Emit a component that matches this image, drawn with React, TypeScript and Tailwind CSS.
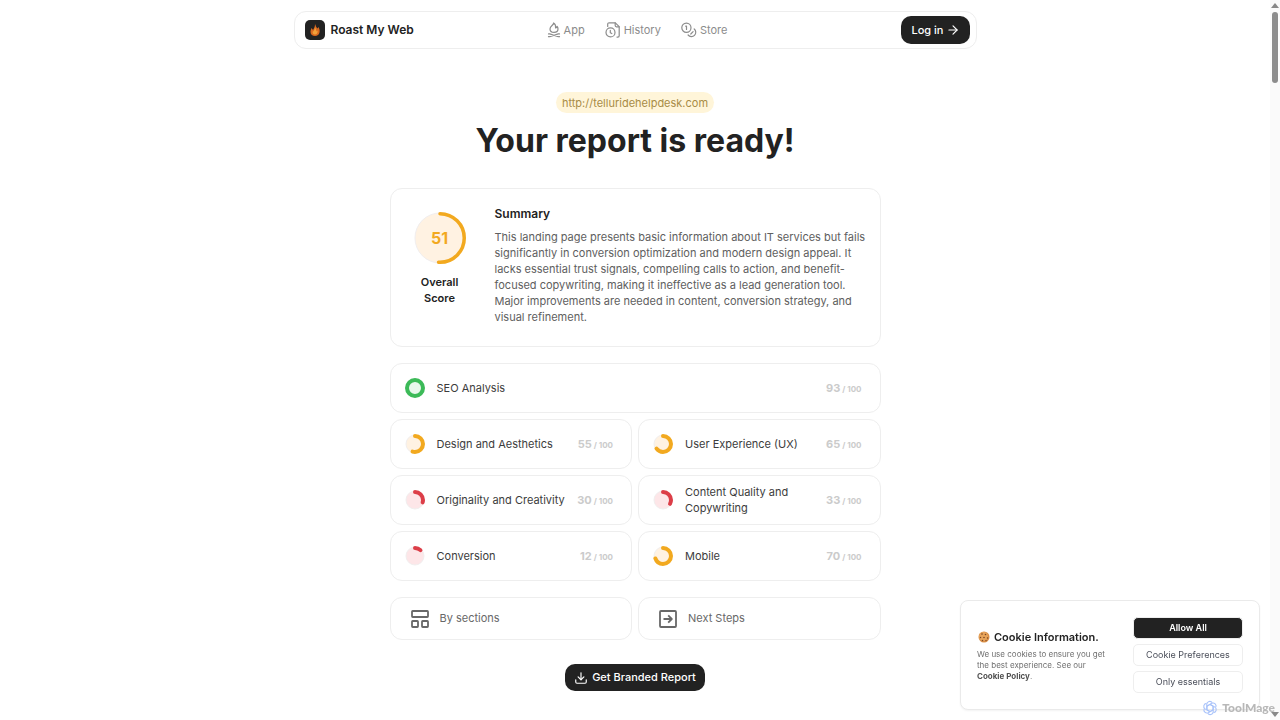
import React from 'react';
import clsx from 'clsx';
import { ArrowRight, Download } from 'lucide-react';

type Tone = 'green' | 'amber' | 'red';

interface ScoreRingProps {
  value: number;
  tone: Tone;
  large?: boolean;
}

interface Category {
  label: string;
  score: number;
  tone: Tone;
  wide?: boolean;
}

const categories: Category[] = [
  { label: 'SEO Analysis', score: 93, tone: 'green', wide: true },
  { label: 'Design and Aesthetics', score: 55, tone: 'amber' },
  { label: 'User Experience (UX)', score: 65, tone: 'amber' },
  { label: 'Originality and Creativity', score: 30, tone: 'red' },
  { label: 'Content Quality and Copywriting', score: 33, tone: 'red' },
  { label: 'Conversion', score: 12, tone: 'red' },
  { label: 'Mobile', score: 70, tone: 'amber' },
];

const tones: Record<Tone, { stroke: string; fill: string }> = {
  green: { stroke: '#3cba58', fill: '#e8f8ec' },
  amber: { stroke: '#f2a91f', fill: '#fff2e2' },
  red: { stroke: '#dc3e48', fill: '#fde6e8' },
};

const ScoreRing: React.FC<ScoreRingProps> = ({ value, tone, large }) => {
  const size = large ? 52 : 20;
  const width = large ? 3.5 : 4;
  const radius = (size - width) / 2;
  const { stroke, fill } = tones[tone];
  const shown = value > 90 ? 100 : value;

  return (
    <svg className={clsx('shrink-0', large ? 'size-13' : 'size-5')} viewBox={`0 0 ${size} ${size}`} fill="none" aria-hidden="true">
      <circle cx={size / 2} cy={size / 2} r={size / 2 - 1} fill={fill} stroke="#f1eeee" strokeWidth="1" />
      <circle
        cx={size / 2}
        cy={size / 2}
        r={radius}
        stroke={stroke}
        strokeWidth={width}
        strokeLinecap="round"
        pathLength={100}
        strokeDasharray={`${shown} 100`}
        transform={`rotate(-90 ${size / 2} ${size / 2})`}
      />
    </svg>
  );
};

const Logo = () => (
  <span className="flex size-5 items-center justify-center rounded-[5px] bg-[#222]">
    <svg className="h-3 w-2.5" viewBox="0 0 20 24" aria-hidden="true">
      <path d="M10 0c2 4 2 6 5 9l2-3c2 4 3 7 2 11-1 4-4 7-9 7s-9-3-9-8c0-3 1-5 2-8l3 4c2-4 4-6 4-12Z" fill="#d9681f" />
      <path d="M10 6c1 3 3 6 3 9l2-2c1 4-1 8-5 8s-6-3-4-7l1 1c1-3 3-5 3-9Z" fill="#f2a13a" />
    </svg>
  </span>
);

const CampfireIcon = () => (
  <svg className="h-4 w-3.5" viewBox="0 0 14 16" fill="none" stroke="currentColor" strokeWidth="1.2" strokeLinecap="round" strokeLinejoin="round" aria-hidden="true">
    <path d="M6.600 1c.3 2.200-3.600 2.900-3.600 5.900 0 2 1.600 3.400 4 3.400s4-1.400 4-3.300c0-1-.3-1.800-.9-2.500-.3.900-.8 1.300-1.500 1.500C8.900 3.800 8.300 2 6.600 1Z" />
    <path d="M1.500 11.900h1.200l8.600 2.800h1.200M12.500 11.900h-1.200l-8.600 2.800H1.500" />
  </svg>
);

const HistoryIcon = () => (
  <svg className="size-4" viewBox="0 0 16 16" fill="none" stroke="currentColor" strokeWidth="1.2" strokeLinecap="round" strokeLinejoin="round" aria-hidden="true">
    <path d="M2.700 4.500V2.200c0-.8.6-1.400 1.400-1.400h6.200L14.200 4.700v9c0 .8-.6 1.400-1.400 1.400H12" />
    <path d="M10.200.9v2.700c0 .7.5 1.200 1.200 1.200h2.700" />
    <circle cx="5.500" cy="10.400" r="4.500" />
    <path d="M5.300 8.300v2.400l1.500.8" />
  </svg>
);

const CoinsIcon = () => (
  <svg className="size-4" viewBox="0 0 16 16" fill="none" stroke="currentColor" strokeWidth="1.2" strokeLinecap="round" strokeLinejoin="round" aria-hidden="true">
    <circle cx="5.400" cy="5.700" r="4.600" />
    <path d="M4.700 4.200h.8v3.200M13.200 7a4.300 4.300 0 1 1-6.100 6" />
    <path d="M12.100 9.600 9.800 12" />
  </svg>
);

const SectionsIcon = () => (
  <svg className="size-[18px]" viewBox="0 0 18 18" fill="none" stroke="currentColor" strokeWidth="1.8" strokeLinejoin="round" aria-hidden="true">
    <rect x="1" y="1" width="16" height="6" rx=".7" />
    <rect x="1" y="11" width="6" height="6" rx=".7" />
    <rect x="11" y="11" width="6" height="6" rx=".7" />
  </svg>
);

const NextIcon = () => (
  <svg className="size-[18px]" viewBox="0 0 18 18" fill="none" stroke="currentColor" strokeWidth="1.8" strokeLinejoin="round" aria-hidden="true">
    <rect x="1" y="1" width="16" height="16" rx="1" />
    <path d="M4.500 9h7.900M9.200 5.400 12.800 9l-3.600 3.600" />
  </svg>
);

const CookieIcon = () => (
  <svg className="size-3" viewBox="0 0 24 24" aria-hidden="true">
    <circle cx="12" cy="12" r="11" fill="#d98e45" />
    <circle cx="11" cy="11" r="9" fill="#e8a55b" />
    <g fill="#7a4523">
      <circle cx="8" cy="6" r="1.600" />
      <circle cx="15" cy="7" r="1.600" />
      <circle cx="5" cy="13" r="1.500" />
      <circle cx="12" cy="13" r="1.600" />
      <circle cx="19" cy="14" r="1.500" />
      <circle cx="9" cy="19" r="1.500" />
      <circle cx="16" cy="19" r="1.300" />
    </g>
  </svg>
);

const KnotIcon = () => (
  <svg className="size-4" viewBox="0 0 16 16" fill="none" stroke="#a9c3fa" strokeWidth="1.100" aria-hidden="true">
    {[0, 60, 120, 180, 240, 300].map((angle) => (
      <path key={angle} d="M4.800 9.800V4.200A3 3 0 0 1 10.300 2.700M8 4.500l3.200 1.800" transform={`rotate(${angle} 8 8)`} />
    ))}
  </svg>
);

const links = [
  { label: 'App', icon: <CampfireIcon /> },
  { label: 'History', icon: <HistoryIcon /> },
  { label: 'Store', icon: <CoinsIcon /> },
];

const Header = () => (
  <header className="mx-auto mt-[11px] grid w-full max-w-[683px] grid-cols-[1fr_auto_1fr] items-center rounded-xl border border-[#eee] py-1 pr-1.5 pl-2.5">
    <a href="#" className="flex items-center gap-1.5 text-[12px] leading-5 font-semibold">
      <Logo />
      Roast My Web
    </a>
    <nav className="flex items-center gap-5 text-[11px] text-[#8c8c8c]">
      {links.map((link) => (
        <a key={link.label} href="#" className="flex items-center gap-[3px]">
          {link.icon}
          {link.label}
        </a>
      ))}
    </nav>
    <button className="flex h-7 items-center gap-0.5 justify-self-end rounded-[10px] bg-[#222] px-2.5 text-[11px] font-medium text-white">
      Log in
      <ArrowRight className="size-3.5" />
    </button>
  </header>
);

const Summary = () => (
  <section className="flex rounded-xl border border-[#eee] pt-4 pr-2.5 pb-[21px] pl-6">
    <div className="mt-[7px] flex w-[50px] shrink-0 flex-col items-center">
      <div className="grid place-items-center *:col-start-1 *:row-start-1">
        <ScoreRing value={51} tone="amber" large />
        <span className="text-base font-bold text-[#f2a91f]">51</span>
      </div>
      <p className="mt-2.5 text-center text-[11px] leading-4 font-semibold">Overall Score</p>
    </div>
    <div className="ml-[30px]">
      <h2 className="text-[12px] leading-[18px] font-semibold">Summary</h2>
      <p className="mt-1.5 text-[11px] leading-4 text-[#606060]">
        This landing page presents basic information about IT services but fails significantly in conversion optimization
        and modern design appeal. It lacks essential trust signals, compelling calls to action, and benefit-focused
        copywriting, making it ineffective as a lead generation tool. Major improvements are needed in content,
        conversion strategy, and visual refinement.
      </p>
    </div>
  </section>
);

const CategoryCard: React.FC<{ category: Category }> = ({ category }) => (
  <button
    className={clsx(
      'flex h-[50px] items-center rounded-xl border border-[#eee] pr-[18px] pl-3.5 text-left text-[11px] leading-4',
      category.wide && 'col-span-2',
    )}
  >
    <ScoreRing value={category.score} tone={category.tone} />
    <span className="ml-3 flex-1 text-[#3c3c3c]">{category.label}</span>
    <span className="ml-1 flex items-baseline gap-0.5 font-bold whitespace-nowrap text-[#cbcbcb]">
      {category.score}
      <span className="text-[8px]">/ 100</span>
    </span>
  </button>
);

const CookieBanner = () => (
  <aside className="fixed right-5 bottom-2.5 flex w-[300px] items-center rounded-lg border border-[#eaeaea] bg-white p-4 shadow-xs">
    <div className="flex-1">
      <h2 className="flex items-center gap-1 pl-px text-[11px] leading-4 font-semibold">
        <CookieIcon />
        Cookie Information.
      </h2>
      <p className="mt-1 w-[135px] text-[8px] leading-[11px] text-[#707070]">
        We use cookies to ensure you get the best experience. See our{' '}
        <a href="#" className="font-bold text-[#505050]">Cookie Policy</a>.
      </p>
    </div>
    <div className="flex w-[110px] flex-col gap-[5px] text-[9px] text-[#4b4f5a]">
      <button className="h-[22px] rounded-[5px] border border-[#eee] bg-[#222] font-semibold text-white">Allow All</button>
      <button className="h-[22px] rounded-[5px] border border-[#eee]">Cookie Preferences</button>
      <button className="h-[22px] rounded-[5px] border border-[#eee]">Only essentials</button>
    </div>
  </aside>
);

const Scrollbar = () => (
  <div className="fixed inset-y-0 right-0 flex w-2.5 flex-col items-center justify-between bg-[#fafafa] py-[3px]" aria-hidden="true">
    <div className="flex flex-col items-center gap-1">
      <svg className="h-[5px] w-2" viewBox="0 0 8 5"><path d="M4 0 8 5H0Z" fill="#888" /></svg>
      <span className="h-[71px] w-1.5 rounded-full bg-[#8c8c8c]" />
    </div>
    <svg className="h-[5px] w-2" viewBox="0 0 8 5"><path d="M4 5 0 0h8Z" fill="#888" /></svg>
  </div>
);

export default function App() {
  return (
    <div className="flex min-h-screen flex-col bg-white pr-2.5 font-['Inter',sans-serif] text-[#222]">
      <Header />
      <main className="mx-auto flex w-full max-w-[491px] flex-col items-center pt-[43px] pb-7">
        <a href="#" className="rounded-full bg-[#fff5d9] px-1.5 pt-[3px] pb-px text-[11px] leading-[17px] text-[#a88c46]">
          http://telluridehelpdesk.com
        </a>
        <h1 className="mt-[5px] text-[32px] leading-[46px] font-bold">Your report is ready!</h1>
        <div className="mt-6 flex w-full flex-col gap-4">
          <Summary />
          <div className="grid grid-cols-2 gap-1.5">
            {categories.map((category) => (
              <CategoryCard key={category.label} category={category} />
            ))}
          </div>
          <div className="grid grid-cols-2 gap-1.5 text-[11px] text-[#686868]">
            <button className="flex h-[43px] items-center gap-[11px] rounded-xl border border-[#eee] px-5">
              <SectionsIcon />
              By sections
            </button>
            <button className="flex h-[43px] items-center gap-[11px] rounded-xl border border-[#eee] px-5">
              <NextIcon />
              Next Steps
            </button>
          </div>
        </div>
        <button className="mt-6 flex h-[27px] items-center gap-1 rounded-[10px] bg-[#222] px-[9px] text-[11px] font-medium text-white">
          <Download className="size-3.5" />
          Get Branded Report
        </button>
      </main>
      <CookieBanner />
      <Scrollbar />
      <div className="fixed right-[5px] bottom-1 flex items-center gap-1 font-['Lato',sans-serif] text-[12px] leading-4 font-black text-[#b8b8b8]">
        <KnotIcon />
        ToolMage
      </div>
    </div>
  );
}
